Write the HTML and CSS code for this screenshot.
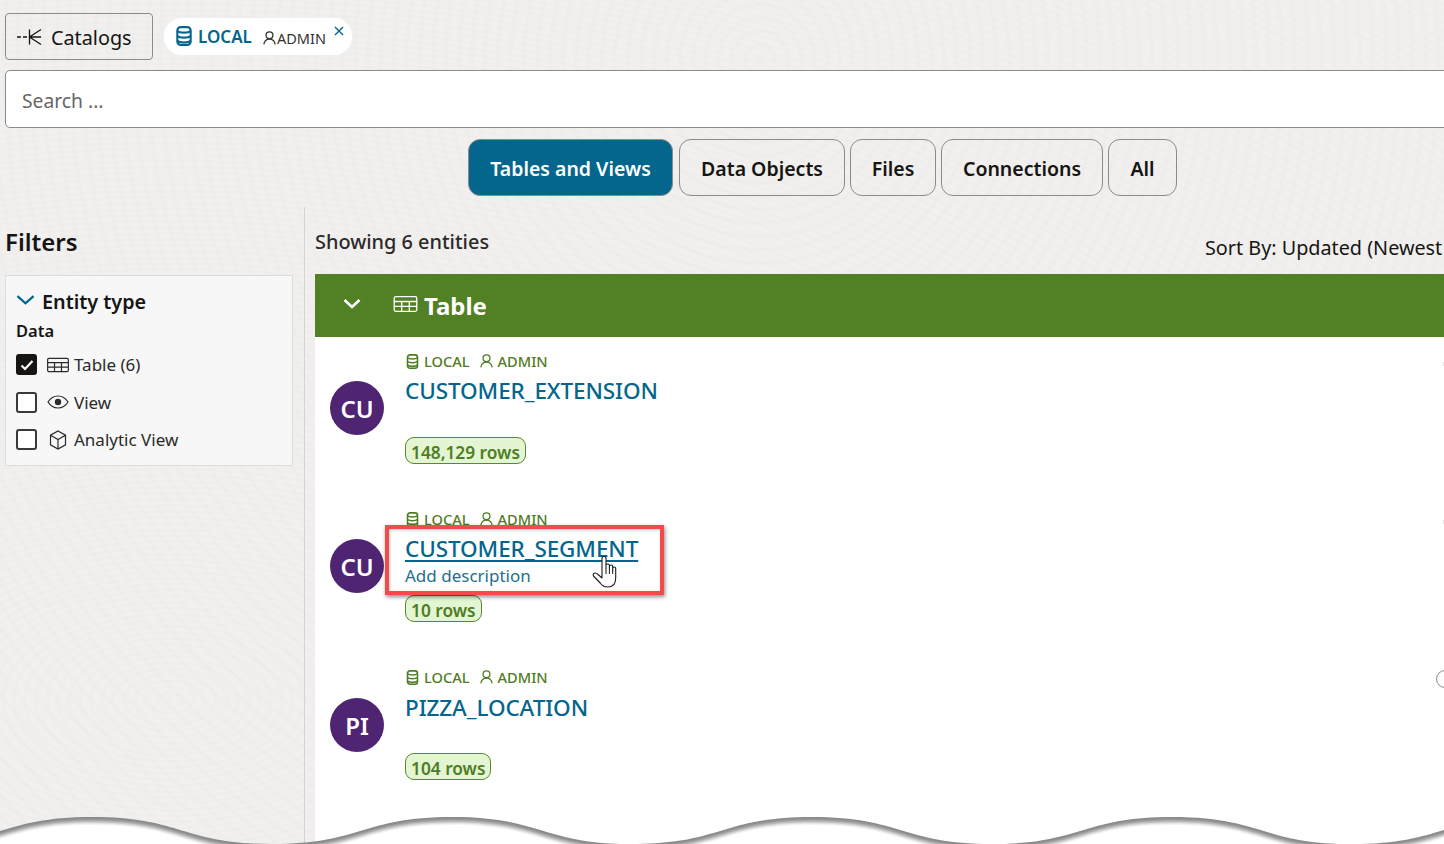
FILE: index.html
```html
<!DOCTYPE html>
<html lang="en">
<head>
<meta charset="utf-8">
<title>Catalogs</title>
<link rel="stylesheet" href="styles.css">
</head>
<body>
<svg width="0" height="0" class="defs">
  <defs>
    <symbol id="db" viewBox="0 0 14 18"><g fill="none" stroke="currentColor" stroke-width="1.900"><rect x="1" y="1" width="12" height="16" rx="3"/><path d="M1 4.500c2 2 10 2 12 0M1 9c2 2 10 2 12 0M1 13.300c2 2 10 2 12 0"/></g></symbol>
    <symbol id="user" viewBox="0 0 14 15"><g fill="none" stroke="currentColor" stroke-width="1.400"><circle cx="7" cy="4.600" r="3.700"/><path d="M.9 14.400c.6-3.600 3-5.600 6.100-5.600s5.500 2 6.100 5.600"/></g></symbol>
    <symbol id="grid" viewBox="0 0 24 16"><g fill="none" stroke="currentColor" stroke-width="1.300"><rect x=".7" y=".7" width="22.600" height="14.600" rx="1.500"/><path d="M.7 5.500h22.600M.7 10.400h22.600M8.200 5.500v9.800M15.800 5.500v9.800"/></g></symbol>
    <path id="wave" d="M-268 817C-178 817-178 844-88 844S2 817 92 817C182 817 182 844 272 844S362 817 452 817C542 817 542 844 632 844S722 817 812 817C902 817 902 844 992 844S1082 817 1172 817C1262 817 1262 844 1352 844S1442 817 1532 817V860H-268Z"/>
  </defs>
</svg>

<div class="page">
  <header class="topbar">
    <button class="back-btn">
      <svg class="back-icon" viewBox="0 0 26 18" width="26" height="18"><path d="M1 9h4M7 9h4M13.500 1.500v15M25 1.500L13.500 9 25 16.500M13.500 9H25" fill="none" stroke="currentColor" stroke-width="1.300"/></svg>
      <span class="back-label">Catalogs</span>
    </button>
    <div class="chip">
      <svg class="chip-db"><use href="#db"/></svg>
      <span class="chip-name">LOCAL</span>
      <svg class="chip-user"><use href="#user"/></svg>
      <span class="chip-owner">ADMIN</span>
      <svg class="chip-x" viewBox="0 0 10 10"><path d="M1 1l8 8M9 1l-8 8" stroke="currentColor" stroke-width="1.400" fill="none"/></svg>
    </div>
  </header>

  <div class="search">Search ...</div>

  <nav class="tabs">
    <button class="tab tab-on">Tables and Views</button>
    <button class="tab tab-data">Data Objects</button>
    <button class="tab tab-files">Files</button>
    <button class="tab tab-conn">Connections</button>
    <button class="tab tab-all">All</button>
  </nav>

  <div class="content">
    <aside class="sidebar">
      <h2 class="filters-title">Filters</h2>
      <section class="filter-panel">
        <div class="filter-head">
          <svg class="filter-chevron" viewBox="0 0 20 10"><path d="M1.500 1l8.500 7.500L18.500 1" fill="none" stroke="currentColor" stroke-width="2.400"/></svg>
          <span>Entity type</span>
        </div>
        <div class="filter-group">Data</div>
        <label class="check-row">
          <span class="box box-on"><svg viewBox="0 0 14 12" width="14" height="12"><path d="M1.500 6.500l3.500 3.500 7.500-8" fill="none" stroke="#fff" stroke-width="2.200"/></svg></span>
          <svg class="check-icon"><use href="#grid"/></svg>
          <span>Table (6)</span>
        </label>
        <label class="check-row">
          <span class="box"></span>
          <svg class="check-icon" viewBox="0 0 22 14"><path d="M1 7c2.500-4 6-6 10-6s7.500 2 10 6c-2.500 4-6 6-10 6S3.500 11 1 7z" fill="none" stroke="currentColor" stroke-width="1.200"/><circle cx="11" cy="7" r="3.200" fill="currentColor"/></svg>
          <span>View</span>
        </label>
        <label class="check-row">
          <span class="box"></span>
          <svg class="check-icon check-cube" viewBox="0 0 18 20"><path d="M9 1l7.500 4.200v9.600L9 19l-7.500-4.200V5.200zM1.500 5.200L9 9.500l7.500-4.300M9 9.500V19" fill="none" stroke="currentColor" stroke-width="1.200"/></svg>
          <span>Analytic View</span>
        </label>
      </section>
    </aside>

    <main class="main">
      <div class="main-head">
        <span class="showing">Showing 6 entities</span>
        <span class="sort">Sort By: Updated (Newest First)</span>
      </div>
      <div class="band">
        <svg class="band-chevron" viewBox="0 0 18 10"><path d="M1.500 1l7.500 7 7.500-7" fill="none" stroke="currentColor" stroke-width="2.600"/></svg>
        <svg class="band-icon"><use href="#grid"/></svg>
        <span class="band-title">Table</span>
      </div>
      <div class="list">
        <article class="row">
          <div class="avatar">CU</div>
          <div class="row-body">
            <div class="meta">
              <svg class="meta-db"><use href="#db"/></svg><span>LOCAL</span>
              <svg class="meta-user"><use href="#user"/></svg><span>ADMIN</span>
            </div>
            <a class="name">CUSTOMER_EXTENSION</a>
            <div class="desc"></div>
            <span class="rows">148,129 rows</span>
          </div>
          <span class="row-tick"></span>
        </article>
        <article class="row">
          <div class="avatar">CU</div>
          <div class="row-body">
            <div class="meta">
              <svg class="meta-db"><use href="#db"/></svg><span>LOCAL</span>
              <svg class="meta-user"><use href="#user"/></svg><span>ADMIN</span>
            </div>
            <a class="name name-hover">CUSTOMER_SEGMENT</a>
            <div class="desc">Add description</div>
            <span class="rows">10 rows</span>
          </div>
          <span class="row-tick"></span>
        </article>
        <article class="row">
          <div class="avatar">PI</div>
          <div class="row-body">
            <div class="meta">
              <svg class="meta-db"><use href="#db"/></svg><span>LOCAL</span>
              <svg class="meta-user"><use href="#user"/></svg><span>ADMIN</span>
            </div>
            <a class="name name-low">PIZZA_LOCATION</a>
            <div class="desc desc-empty"></div>
            <span class="rows">104 rows</span>
          </div>
          <span class="row-action"></span>
        </article>
      </div>
    </main>
  </div>
</div>

<div class="callout"></div>
<svg class="hand" viewBox="0 0 26 33" width="26" height="33"><path d="M10 20V3.500q0-2 2-2t2 2V13v-2.500q0-1.500 1.700-1.500t1.700 1.500V14v-2.500q0-1.500 1.700-1.500t1.600 1.500V15v-1.500q0-1.500 1.500-1.500t1.500 1.500V23q0 9-8 9-5 0-7.500-4L1.500 21q-1-2 .8-2.800 1.800-.7 3.700 1.300L10 23z" fill="#fff" stroke="#1a1a1a" stroke-width="1.100" stroke-linejoin="round"/><path d="M14 13v6M17.400 14v5M20.700 15v4" stroke="#1a1a1a" stroke-width="1" fill="none"/></svg>

<svg class="torn" viewBox="0 800 1444 44" width="1444" height="44">
  <use href="#wave" class="t0"/>
  <use href="#wave" class="t1" transform="translate(0 1)"/>
  <use href="#wave" class="t2" transform="translate(0 2)"/>
  <use href="#wave" class="t3" transform="translate(0 3)"/>
  <use href="#wave" class="t4" transform="translate(0 4)"/>
  <use href="#wave" class="t5" transform="translate(0 5)"/>
  <use href="#wave" class="t6" transform="translate(0 6)"/>
  <use href="#wave" class="t7" transform="translate(0 7)"/>
  <use href="#wave" class="t8" transform="translate(0 8)"/>
</svg>
</body>
</html>
```

FILE: styles.css
```css
* { box-sizing: border-box; }
html, body { margin: 0; height: 844px; overflow: hidden; }
body {
  position: relative;
  width: 1444px;
  font-family: "Noto Sans", "Open Sans", sans-serif;
  color: #161513;
  background-color: #f1f0ee;
  background-image:
    repeating-radial-gradient(ellipse at 170px 700px, rgba(0,0,0,.007) 0 4px, transparent 4px 11px),
    repeating-radial-gradient(ellipse at 760px 60px, rgba(0,0,0,.006) 0 4px, transparent 4px 13px);
}
.defs { position: absolute; }
.page { width: 1635px; margin-left: 5px; padding-top: 13px; }

/* top */
.topbar { display: flex; align-items: flex-start; gap: 11px; height: 47px; }
.back-btn {
  display: flex; align-items: center; gap: 9px;
  width: 148px; height: 47px; padding: 0 0 0 10px;
  background: transparent; border: 1px solid #8b8b8b; border-radius: 4px;
  font: 400 19.800px "Noto Sans", sans-serif; color: #161513;
}
.back-label { padding-top: 2px; }
.back-icon { width: 26px; height: 18px; flex: none; }
.chip {
  position: relative;
  display: flex; align-items: center;
  width: 188px; height: 37px; margin-top: 5px; padding-left: 12px;
  background: #fff; border-radius: 18px; color: #04668c;
}
.chip-db { width: 16px; height: 20px; margin-right: 6px; margin-top: -1px; }
.chip-name { font-size: 17px; font-weight: 600; width: 65px; white-space: nowrap; }
.chip-user { width: 13px; height: 14px; color: #333; margin-right: 1px; margin-top: 2px; }
.chip-owner { font-size: 14.500px; color: #333; margin-top: 3px; }
.chip-x { position: absolute; left: 170px; top: 8px; width: 10px; height: 10px; }
.search {
  height: 58px; margin-top: 10px; padding: 3px 16px 0;
  display: flex; align-items: center;
  background: #fff; border: 1px solid #8b8b8b; border-radius: 5px;
  font-size: 19.300px; color: #666;
}
.tabs { display: flex; justify-content: center; gap: 5px; margin-top: 11px; }
.tab {
  height: 57px; padding: 1px 0 0;
  background: transparent; border: 1px solid #8b8b8b; border-radius: 12px;
  font: 600 19.500px "Noto Sans", sans-serif; color: #161513;
}
.tab-on { width: 205px; background: #04668c; color: #fff; margin-right: 1px; }
.tab-data { width: 166px; }
.tab-files { width: 86px; }
.tab-conn { width: 162px; }
.tab-all { width: 69px; }

/* layout */
.content { display: flex; margin-top: 11px; }
.sidebar { width: 300px; height: 640px; padding: 19px 11px 0 0; border-right: 1px solid #d6d5d3; }
.main { flex: 1; margin-left: 10px; }

/* filters */
.filters-title { margin: 0; font-size: 24px; line-height: 32px; font-weight: 600; }
.filter-panel {
  height: 191px; margin-top: 17px; padding: 11px 10px 0;
  background: #f7f7f7; border: 1px solid #dcdcdc;
}
.filter-head { display: flex; align-items: center; gap: 7px; height: 28px; font-size: 19.800px; font-weight: 600; }
.filter-chevron { width: 19px; height: 10px; margin-top: -3px; color: #04668c; }
.filter-group { margin-top: 4px; font-size: 16.500px; font-weight: 600; line-height: 24px; }
.check-row { display: flex; align-items: center; height: 37.500px; font-size: 17px; color: #2b2a28; }
.check-row:first-of-type { margin-top: 3px; }
.box {
  display: flex; align-items: center; justify-content: center;
  width: 21px; height: 21px; margin-right: 10px;
  border: 2px solid #3a3936; border-radius: 3px; background: #fff;
}
.box-on { background: #161513; border-color: #161513; }
.check-icon { width: 22px; height: 16px; margin-right: 5px; flex: none; }
.check-cube { height: 20px; color: #2b2a28; }

/* list */
.main-head { position: relative; display: flex; height: 67px; }
.showing { margin-top: 21px; font-size: 19.900px; line-height: 28px; font-weight: 500; color: #2b2a28; }
.sort { margin-left: auto; margin-top: 27px; width: 435px; font-size: 19.800px; line-height: 28px; white-space: nowrap; }
.band {
  display: flex; align-items: center;
  height: 63px; padding-left: 28px;
  background: #518025; color: #fff;
}
.band-chevron { width: 18px; height: 10px; margin-top: -3px; margin-right: 32px; }
.band-icon { width: 25px; height: 16px; margin-right: 6px; margin-top: -3px; stroke-width: 1.300; }
.band-title { font-size: 24px; font-weight: 700; }
.list { background: #fff; padding-top: 15px; height: 560px; }
.row { display: flex; height: 158px; padding-left: 15px; }
.avatar {
  display: flex; align-items: center; justify-content: center;
  width: 54px; height: 54px; margin: 29px 21px 0 0; padding-top: 1px; flex: none;
  border-radius: 50%; background: #4f2472; color: #fff;
  font-size: 24px; font-weight: 600;
}
.row:last-child .avatar { margin-top: 30px; }
.row-body { flex: 1; }
.meta { display: flex; align-items: center; height: 20px; margin-top: -1px; padding-left: 1px; font-size: 14.600px; font-weight: 500; color: #4f7d23; }
.meta-db { width: 13px; height: 15px; margin-right: 5px; }
.meta-user { width: 13px; height: 14px; margin: -1px 5px 0 10px; }
.name { display: block; width: max-content; margin-top: 4px; font-size: 22.500px; line-height: 32px; font-weight: 500; letter-spacing: -.1px; color: #04668c; }
.name-low { margin-top: 5px; }
.name-hover { text-decoration: underline; text-decoration-thickness: 2px; text-underline-offset: 3px; }
.desc { height: 24px; margin-top: -1px; font-size: 17px; line-height: 24px; color: #1f6f8e; }
.desc-empty { height: 23px; }
.rows {
  display: inline-block; height: 27px; margin-top: 7px; padding: 0 5px;
  background: #e4f5d3; border: 1px solid #578a2a; border-radius: 9px;
  font-size: 17.300px; line-height: 29px; font-weight: 600; color: #4f7d23;
}
.row-tick { width: 2px; height: 4px; margin: 10px 195px 0 0; background: #e4e4e4; }
.row-action { width: 18px; height: 18px; margin: 2px 186px 0 0; border: 1.500px solid #8a8a8a; border-radius: 50%; }

/* annotations over the page */
.callout {
  position: absolute; left: 385px; top: 525px; width: 279px; height: 70px;
  border: 4px solid #f44a4a;
  box-shadow: 1px 2px 4px rgba(0,0,0,.45), inset 1px 1px 3px rgba(0,0,0,.25);
}
.hand { position: absolute; left: 592px; top: 555px; }
.torn { position: absolute; left: 0; top: 800px; display: block; }
.t0 { fill: #8a8a8a; }
.t1 { fill: #8e8e8e; }
.t2 { fill: #9a9a9a; }
.t3 { fill: #aaaaaa; }
.t4 { fill: #bdbdbd; }
.t5 { fill: #d2d2d2; }
.t6 { fill: #e6e6e6; }
.t7 { fill: #f5f5f5; }
.t8 { fill: #fff; }
```
